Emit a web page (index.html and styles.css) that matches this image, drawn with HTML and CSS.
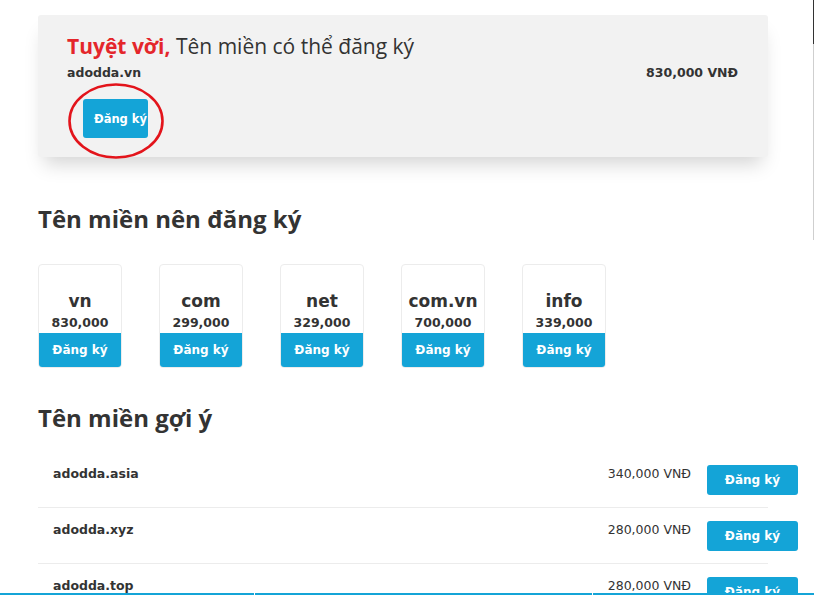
FILE: index.html
```html
<!DOCTYPE html>
<html lang="vi">
<head>
<meta charset="utf-8">
<title>Tên miền</title>
<link rel="stylesheet" href="styles.css">
</head>
<body>
<div class="page">
  <section class="result">
    <h2 class="result-title"><span class="great">Tuyệt vời,</span> Tên miền có thể đăng ký</h2>
    <div class="result-row">
      <span class="result-name">adodda.vn</span>
      <span class="result-price">830,000 VNĐ</span>
    </div>
    <div class="result-action">
      <button class="btn btn-main">Đăng ký</button>
      <svg class="circle" width="98" height="78" viewBox="0 0 98 78"><ellipse cx="49" cy="39" rx="46.5" ry="36.5" fill="none" stroke="#e3141b" stroke-width="2.6"/></svg>
    </div>
  </section>

  <h2 class="section-title">Tên miền nên đăng ký</h2>
  <div class="tlds">
    <div class="tld"><div class="tld-body"><div class="tld-name">vn</div><div class="tld-price">830,000</div></div><div class="tld-btn">Đăng ký</div></div>
    <div class="tld"><div class="tld-body"><div class="tld-name">com</div><div class="tld-price">299,000</div></div><div class="tld-btn">Đăng ký</div></div>
    <div class="tld"><div class="tld-body"><div class="tld-name">net</div><div class="tld-price">329,000</div></div><div class="tld-btn">Đăng ký</div></div>
    <div class="tld"><div class="tld-body"><div class="tld-name">com.vn</div><div class="tld-price">700,000</div></div><div class="tld-btn">Đăng ký</div></div>
    <div class="tld"><div class="tld-body"><div class="tld-name">info</div><div class="tld-price">339,000</div></div><div class="tld-btn">Đăng ký</div></div>
  </div>

  <h2 class="section-title title-suggest">Tên miền gợi ý</h2>
  <div class="suggest">
    <div class="srow"><span class="sname">adodda.asia</span><span class="sprice">340,000 VNĐ</span><button class="btn btn-row">Đăng ký</button></div>
    <div class="srow"><span class="sname">adodda.xyz</span><span class="sprice">280,000 VNĐ</span><button class="btn btn-row">Đăng ký</button></div>
    <div class="srow"><span class="sname">adodda.top</span><span class="sprice">280,000 VNĐ</span><button class="btn btn-row">Đăng ký</button></div>
  </div>
</div>
<div class="edge"><div class="edge-dark"></div><div class="edge-light"></div></div>
<div class="bottombar"><div class="seg seg1"></div><div class="seg seg2"></div><div class="seg seg3"></div></div>
</body>
</html>
```

FILE: styles.css
```css
* { box-sizing: border-box; }
html, body { margin: 0; padding: 0; background: #fff; overflow: hidden; }
body { font-family: "DejaVu Sans", Verdana, sans-serif; color: #333; width: 814px; height: 595px; }
.page { padding: 15px 0 0 38px; width: 768px; }

.result {
  width: 730px;
  background: #f2f2f2;
  border-radius: 3px;
  padding: 18px 30px 19px 29px;
  box-shadow: 0 13px 18px -6px rgba(0,0,0,0.17);
}
.result-title {
  margin: 0;
  font-family: "Open Sans", sans-serif;
  font-weight: 400;
  font-size: 21px;
  line-height: 26px;
  color: #333;
}
.great { color: #e4262b; font-weight: 700; }
.result-row {
  display: flex; justify-content: space-between; align-items: center;
  margin-top: 6px; font-weight: 700; font-size: 12.5px; line-height: 16px; color: #333;
}
.result-action { position: relative; padding: 18px 0 0 16px; height: 39px; box-sizing: content-box; }
.circle { position: absolute; left: 0; top: 1px; }
.btn {
  border: 0; background: #14a4d7; color: #fff; font-family: "DejaVu Sans", Verdana, sans-serif;
  font-weight: 700; font-size: 11.5px; border-radius: 3px; cursor: pointer; padding: 0; white-space: nowrap;
}
.btn-main { width: 65px; height: 39px; display: block; position: relative; text-align: left; padding-left: 11px; font-size: 11.5px; }

.section-title {
  margin: 0;
  font-family: "Open Sans", sans-serif;
  font-weight: 700;
  font-size: 24px;
  line-height: 30px;
  color: #333;
  padding-top: 47px;
}
.title-suggest { padding-top: 35px; }

.tlds { display: flex; gap: 37px; margin-top: 30px; }
.tld {
  width: 84px; height: 104px; border: 1px solid #ececec; border-radius: 4px; overflow: hidden;
  display: flex; flex-direction: column; text-align: center;
}
.tld-body { flex: 1; padding-top: 25px; }
.tld-name { font-weight: 700; font-size: 17px; line-height: 22px; color: #333; }
.tld-price { font-weight: 700; font-size: 12.5px; line-height: 16px; margin-top: 3px; color: #333; }
.tld-btn { height: 34px; background: #14a4d7; color: #fff; font-weight: 700; font-size: 12px; line-height: 34px; }

.suggest { margin-top: 19px; width: 760px; }
.srow {
  display: flex; align-items: center; height: 56px; width: 730px; position: relative;
  border-bottom: 1px solid #ececec; padding-left: 15px;
}
.sname { font-weight: 700; font-size: 12.5px; color: #333; flex: 1; margin-top: -12px; }
.sprice { font-size: 12.5px; color: #333; margin-top: -12px; margin-right: 16px; }
.btn-row { width: 91px; height: 30px; margin-right: -30px; font-size: 12px; }

.edge { position: fixed; right: 0; top: 0; width: 1px; }
.edge-dark { height: 44px; background: #333; }
.edge-light { height: 196px; background: #cfcfcf; }

.bottombar { position: fixed; left: 0; bottom: 0; width: 814px; height: 2px; display: flex; gap: 1px; }
.seg { background: #14a4d7; height: 2px; }
.seg1 { width: 254px; }
.seg2 { width: 337px; }
.seg3 { flex: 1; }
```
